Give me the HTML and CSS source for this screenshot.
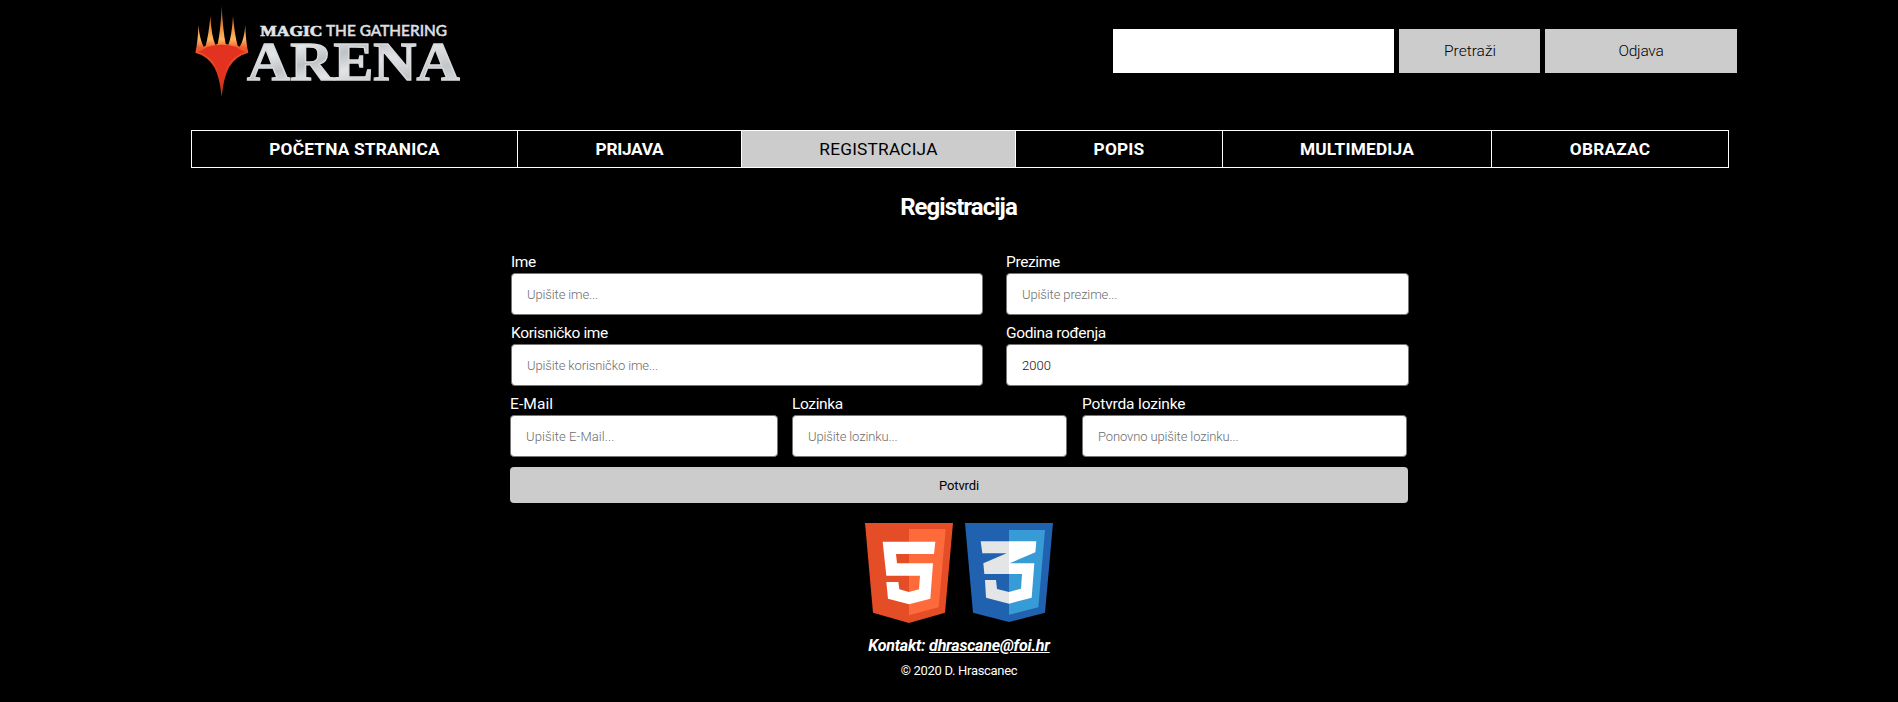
FILE: index.html
```html
<!DOCTYPE html>
<html lang="hr">
<head>
<meta charset="utf-8">
<title>Registracija</title>
<link rel="stylesheet" href="styles.css">
</head>
<body>
<header class="header">
  <svg class="logo" viewBox="0 0 900 330" role="img" aria-label="Magic The Gathering Arena">
    <defs>
      <linearGradient id="flame" x1="0" y1="20" x2="0" y2="290" gradientUnits="userSpaceOnUse">
        <stop offset="0" stop-color="#a83a18"/><stop offset=".22" stop-color="#e8883a"/><stop offset=".36" stop-color="#ffb860"/><stop offset=".46" stop-color="#f0582a"/><stop offset=".75" stop-color="#e8331c"/><stop offset="1" stop-color="#b8381a"/>
      </linearGradient>
      <linearGradient id="steel" x1="0" y1="0" x2="1" y2="1">
        <stop offset="0" stop-color="#d2d4d6"/><stop offset=".25" stop-color="#e2e4e6"/><stop offset=".4" stop-color="#bfc2c5"/><stop offset=".55" stop-color="#e2e4e6"/><stop offset=".75" stop-color="#c3c6c9"/><stop offset="1" stop-color="#e0e2e4"/>
      </linearGradient>
    </defs>
    <path fill="url(#flame)" d="M55 76 Q60 122 71 140 L77 137 Q86 105 91 48 Q95 112 106 134 L113 132 Q122 92 125 18 Q129 92 137 132 L145 134 Q155 112 159 48 Q164 105 173 137 L179 140 Q192 122 196 76 Q197 125 205 158 Q166 168 147 202 Q131 232 125 290 Q119 232 103 202 Q84 168 46 158 Q54 125 55 76Z"/>
    <path fill="#e3321f" d="M54 155 Q70 151 82 141 Q125 128 169 141 Q181 151 197 155 Q159 167 141 200 Q130 222 125 250 Q120 222 109 200 Q91 167 54 155Z"/>
    <text class="logo-magic" x="241" y="108" textLength="186" lengthAdjust="spacingAndGlyphs">MAGIC</text>
    <text class="logo-gathering" x="438" y="108" textLength="363" lengthAdjust="spacingAndGlyphs">THE GATHERING</text>
    <text class="logo-arena" x="201" y="240" textLength="638" lengthAdjust="spacingAndGlyphs">ARENA</text>
  </svg>
  <form class="search">
    <input class="search-input" type="text" aria-label="Pretraži">
    <button class="search-button" type="button">Pretraži</button>
    <button class="logout-button" type="button">Odjava</button>
  </form>
</header>
<nav class="nav">
  <a class="nav-item">POČETNA STRANICA</a>
  <a class="nav-item tight">PRIJAVA</a>
  <a class="nav-item active">REGISTRACIJA</a>
  <a class="nav-item">POPIS</a>
  <a class="nav-item">MULTIMEDIJA</a>
  <a class="nav-item">OBRAZAC</a>
</nav>
<main class="main">
  <h1 class="title">Registracija</h1>
  <form class="form">
    <div class="row row-pair">
      <label class="field"><span>Ime</span><input type="text" placeholder="Upišite ime..."></label>
      <label class="field"><span>Prezime</span><input type="text" placeholder="Upišite prezime..."></label>
    </div>
    <div class="row row-pair">
      <label class="field"><span>Korisničko ime</span><input type="text" placeholder="Upišite korisničko ime..."></label>
      <label class="field"><span>Godina rođenja</span><input class="year" type="text" value="2000"></label>
    </div>
    <div class="row row-triple">
      <label class="field"><span class="wide">E-Mail</span><input class="wide" type="text" placeholder="Upišite E-Mail..."></label>
      <label class="field"><span>Lozinka</span><input type="password" placeholder="Upišite lozinku..."></label>
      <label class="field"><span class="semi">Potvrda lozinke</span><input type="password" placeholder="Ponovno upišite lozinku..."></label>
    </div>
    <button class="submit" type="button">Potvrdi</button>
  </form>
</main>
<footer class="footer">
  <div class="badges">
    <svg class="badge" viewBox="27 39 300 300">
      <path fill="#e44d26" d="M45 39H309L285 308L177 339L69 308Z"/>
      <path fill="#ff6a3a" d="M177 57H287L266 292L177 316Z"/>
      <path fill="#fff" d="M98 95H256L252 132H138L141 160H249L241 266L177 283L114 266L109 216H145L148 238L177 246L207 238L210 197H109Z"/>
    </svg>
    <svg class="badge" viewBox="327 39 300 300">
      <path fill="#2062af" d="M345 39H609L585 308L477 336L369 308Z"/>
      <path fill="#379cd6" d="M477 60H585L565 292L477 314Z"/>
      <path fill="#e4e5e7" d="M392 94H477V192H403L400 160L470 130H397ZM405 210H438L441 237L477 246V281L408 263Z"/>
      <path fill="#fff" d="M477 94H559L556 127L479 160H553L545 263L477 281V246L513 236L516 192H477Z"/>
    </svg>
  </div>
  <address class="contact">Kontakt: <a class="mail">dhrascane@foi.hr</a></address>
  <p class="copyright">© 2020 D. Hrascanec</p>
</footer>
</body>
</html>
```
FILE: styles.css
```css
* { box-sizing: border-box; }
body { margin: 0; background: #000; color: #fff; font-family: Roboto, "Liberation Sans", sans-serif; }
input, button { font-family: inherit; margin: 0; }

.header { display: flex; justify-content: space-between; align-items: flex-start; height: 130px; padding: 0 161px 0 180px; }
.logo { width: 300px; height: 110px; }
.logo-magic { font: bold 46px "Liberation Serif", serif; fill: #e2e4e6; stroke: #e2e4e6; stroke-width: 2px; }
.logo-gathering { font: 500 44px Lato, sans-serif; fill: #dcdee0; stroke: #dcdee0; stroke-width: 1.5px; }
.logo-arena { font: bold 162px "Liberation Serif", serif; fill: url(#steel); stroke: #d8dadc; stroke-width: 4px; }

.search { display: flex; gap: 5px; padding-top: 29px; }
.search-input { width: 281px; height: 44px; border: 0; border-radius: 0; background: #fff; }
.search-button, .logout-button { height: 44px; padding: 0 0 0 1px; border: 0; background: #ccc; color: #000; font-size: 15.5px; font-weight: 300; }
.search-button { width: 141px; }
.logout-button { width: 192px; padding: 0; letter-spacing: -.25px; }

.nav { display: grid; grid-template-columns: 325px 224px 274px 207px 269px 237px; width: 1538px; height: 38px; margin-left: 191px; border: 1px solid #fff; }
.nav-item { display: flex; align-items: center; justify-content: center; border-left: 1px solid #fff; font-size: 17.3px; font-weight: 700; letter-spacing: .2px; }
.nav-item:first-child { border-left: 0; }
.nav-item.tight { letter-spacing: -.3px; }
.nav-item.active { background: #ccc; color: #000; font-weight: 400; }

.main { width: 898px; margin-left: 510px; }
.title { margin: 24px 0 0; height: 62px; line-height: 30px; padding-right: 1px; text-align: center; font-size: 24px; font-weight: 700; letter-spacing: -.95px; }
.form { display: flex; flex-direction: column; }
.row { display: grid; height: 71px; }
.row-pair { grid-template-columns: 472px 403px; column-gap: 23px; margin-left: 1px; }
.row-triple { grid-template-columns: 268px 275px 325px; column-gap: 14px; }
.row-triple .field:last-child { margin: 0 -1px 0 1px; }
.field { display: flex; flex-direction: column; font-size: 15.5px; letter-spacing: -.36px; }
.field span { height: 19px; line-height: 16px; }
.field .wide { letter-spacing: .1px; }
.field .semi { letter-spacing: -.15px; }
.field input { width: 100%; height: 42px; padding: 0 15px; border: 1px solid #767676; border-radius: 4px; background: #fff; color: #111; font-size: 13px; font-weight: 300; letter-spacing: -.12px; }
.field input::placeholder { color: #6c6c6c; opacity: 1; }
.field .year { letter-spacing: .05px; }
.submit { height: 36px; border: 0; border-radius: 4px; background: #ccc; color: #000; font-size: 13px; font-weight: 400; letter-spacing: -.14px; }

.footer { display: flex; flex-direction: column; align-items: center; width: 898px; margin: 20px 0 0 510px; }
.badges { display: flex; }
.badge { width: 100px; height: 100px; }
.contact { margin-top: 13px; line-height: 20px; font-size: 16px; font-weight: 700; font-style: italic; letter-spacing: -.2px; }
.mail { text-decoration: underline; }
.copyright { margin: 6px 0 0; line-height: 18px; font-size: 13px; letter-spacing: -.3px; }
```
